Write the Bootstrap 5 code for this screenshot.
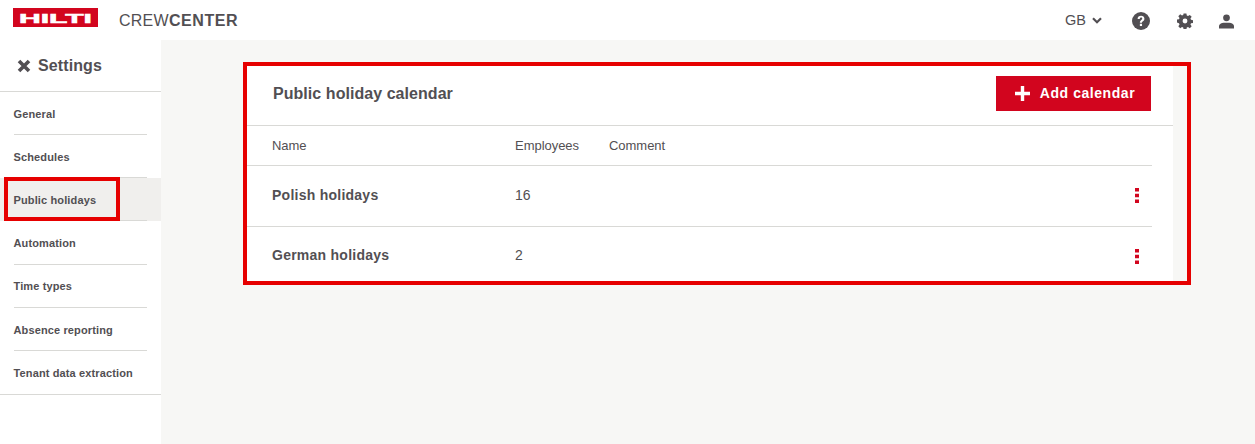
<!DOCTYPE html>
<html lang="en">
<head>
    <meta charset="UTF-8">
    <meta name="viewport" content="width=device-width, initial-scale=1.0">
    <title>Crew Center</title>
    <link href="https://cdn.jsdelivr.net/npm/bootstrap@5.3.0/dist/css/bootstrap.min.css" rel="stylesheet">
    <style>
        html, body { height: 100%; overflow: hidden; }
        body { font-family: "Liberation Sans", Arial, sans-serif; color: #524f53; background: #f7f7f5; }
        .top-bar { height: 40px; background: #fff; padding: 0 21px 0 13px; }
        .brand-logo { display: block; width: 85px; height: 19px; margin-top: -6px; }
        .brand-name { font-size: 16px; margin-left: 21px; margin-top: 1px; letter-spacing: .25px; }
        .brand-name b { letter-spacing: .6px; }
        .top-lang { font-size: 14.5px; margin-right: 30px; margin-top: 1px; }
        .top-lang svg { margin-left: 6px; }
        .top-icons { gap: 26.5px; margin-top: 2px; }
        .page-body { height: 404px; }
        .side-nav { width: 161px; background: #fff; flex: none; }
        .side-title { height: 52px; border-bottom: 1px solid #d9d9d6; padding: 0 0 0 17px; font-size: 16px; font-weight: 700; gap: 7px; letter-spacing: .1px; }
        .side-list { border-bottom: 1px solid #d9d9d6; }
        .side-item { position: relative; height: 43.15px; padding: 0 14px 0 13.5px; font-size: 11px; font-weight: 700; letter-spacing: .13px; }
        .side-item span { display: flex; align-items: center; height: 100%; padding-top: 2px; border-bottom: 1px solid #d9d9d6; }
        .side-item:last-child span { border-bottom: 0; }
        .side-item.is-active { background: #f0efed; }
        .side-mark { position: absolute; left: 4px; top: -1px; width: 116px; height: 44px; border: 4px solid #e60000; }
        .main-area { padding: 22px 64px 0 82px; }
        .mark-frame { border: 4px solid #e60000; height: 223px; padding-right: 14px; }
        .cal-panel { background: #fff; height: 100%; }
        .cal-head { height: 60px; padding: 0 22px 4px 26px; border-bottom: 1px solid #d9d9d6; }
        .cal-title { font-size: 16px; font-weight: 700; margin: 0; letter-spacing: .05px; }
        .btn-add { background: #d2051e; color: #fff; border: 0; border-radius: 0; height: 35px; width: 155px; padding: 0 0 0 3px; font-size: 14px; font-weight: 700; letter-spacing: .55px; gap: 10px; }
        .btn-add:hover { background: #d2051e; color: #fff; }
        .cal-table { table-layout: fixed; color: #524f53; --bs-table-bg: transparent; margin: 0; font-size: 13px; }
        .cal-table th, .cal-table td { padding: 0; vertical-align: middle; border-color: #d9d9d6; }
        .cal-table thead th { height: 39px; font-weight: 400; font-size: 13px; letter-spacing: -.03px; }
        .cal-table tbody td { height: 61px; font-size: 14px; }
        .cal-table tbody tr:last-child td { border-bottom: 0; height: 54px; padding-top: 4px; }
        .cal-table .col-name { width: 268px; padding-left: 25px; font-weight: 700; letter-spacing: .25px; }
        .cal-table thead .col-name { font-weight: 400; letter-spacing: -.03px; }
        .cal-table .col-count { width: 94px; }
        .cal-table .col-act { width: 30px; }
        .cal-table .col-gap { width: 21px; border-bottom: 0; }
        .dots-icon { display: block; margin-left: 13px; }
        .cal-table tbody tr:last-child .dots-icon { margin-top: 2px; }
    </style>
</head>
<body>
    <!-- Top bar -->
    <header class="top-bar d-flex align-items-center justify-content-between">
        <div class="d-flex align-items-center">
            <svg class="brand-logo" viewBox="0 0 85 19" role="img" aria-label="Hilti">
                <rect width="85" height="19" fill="#d2051e"/>
                <text x="6" y="14.500" fill="#fff" stroke="#fff" stroke-width=".5" font-family="Liberation Sans" font-weight="700" font-size="12.5" textLength="73" lengthAdjust="spacingAndGlyphs">HILTI</text>
            </svg>
            <div class="brand-name">CREW<b>CENTER</b></div>
        </div>
        <div class="d-flex align-items-center">
            <div class="top-lang d-flex align-items-center">GB
                <svg width="10" height="7" viewBox="0 0 10 7"><path d="M1 1.200l4 4 4-4" fill="none" stroke="#524f53" stroke-width="2.200"/></svg>
            </div>
            <div class="top-icons d-flex align-items-center">
                <svg width="18" height="18" viewBox="0 0 19 19">
                    <circle cx="9.500" cy="9.500" r="9.500" fill="#524f53"/>
                    <path d="M5.900 7.300c0-2 1.500-3.300 3.700-3.300 2 0 3.500 1.200 3.500 3 0 2.500-2.600 2.500-2.600 4.400H8.300c0-3 2.500-2.900 2.500-4.300 0-.7-.5-1.200-1.200-1.200-.8 0-1.400.6-1.400 1.500z" fill="#fff"/>
                    <rect x="8.300" y="12.400" width="2.300" height="2.400" fill="#fff"/>
                </svg>
                <svg width="16" height="16" viewBox="0 0 17 17">
                    <path d="M7 .5h3l.4 2.200 1.300.6 1.900-1.300 2 2-1.300 1.900.6 1.300 2.100.4v3l-2.100.4-.6 1.300 1.300 1.900-2 2-1.900-1.300-1.300.6-.4 2.100H7l-.4-2.100-1.300-.6-1.900 1.300-2-2 1.300-1.900-.6-1.300L0 10V7l2.100-.4.6-1.300L1.400 3.400l2-2 1.900 1.300 1.300-.6z" fill="#524f53"/>
                    <circle cx="8.500" cy="8.500" r="2.600" fill="#fff"/>
                </svg>
                <svg width="15" height="15" viewBox="0 0 16 16">
                    <circle cx="8" cy="4" r="3.600" fill="#524f53"/>
                    <path d="M0 15.500v-2.600c0-2 2.600-3.400 5-3.600h6c2.400.2 5 1.600 5 3.600v2.600z" fill="#524f53"/>
                </svg>
            </div>
        </div>
    </header>

    <div class="page-body d-flex">
        <!-- Sidebar -->
        <nav class="side-nav">
            <div class="side-title d-flex align-items-center">
                <svg width="14" height="14" viewBox="0 0 14 14"><path d="M2 2l10 10M12 2L2 12" stroke="#524f53" stroke-width="3.600"/></svg>
                Settings
            </div>
            <div class="side-list">
                <div class="side-item"><span>General</span></div>
                <div class="side-item"><span>Schedules</span></div>
                <div class="side-item is-active"><span>Public holidays</span><div class="side-mark"></div></div>
                <div class="side-item"><span>Automation</span></div>
                <div class="side-item"><span>Time types</span></div>
                <div class="side-item"><span>Absence reporting</span></div>
                <div class="side-item"><span>Tenant data extraction</span></div>
            </div>
        </nav>

        <!-- Calendar list -->
        <main class="main-area flex-grow-1">
            <div class="mark-frame">
                <section class="cal-panel">
                    <div class="cal-head d-flex align-items-center justify-content-between">
                        <h1 class="cal-title">Public holiday calendar</h1>
                        <button type="button" class="btn btn-add d-flex align-items-center justify-content-center">
                            <svg width="15" height="15" viewBox="0 0 15 15"><path d="M7.500 0v15M0 7.500h15" stroke="#fff" stroke-width="3.400"/></svg>
                            Add calendar
                        </button>
                    </div>
                    <table class="table cal-table">
                        <thead>
                            <tr><th class="col-name">Name</th><th class="col-count">Employees</th><th>Comment</th><th class="col-act"></th><th class="col-gap"></th></tr>
                        </thead>
                        <tbody>
                            <tr>
                                <td class="col-name">Polish holidays</td><td>16</td><td></td>
                                <td><svg class="dots-icon" width="4" height="15" viewBox="0 0 4 15"><path d="M0 0h4v3.600H0zM0 5.700h4v3.600H0zM0 11.400h4V15H0z" fill="#d2051e"/></svg></td>
                                <td class="col-gap"></td>
                            </tr>
                            <tr>
                                <td class="col-name">German holidays</td><td>2</td><td></td>
                                <td><svg class="dots-icon" width="4" height="15" viewBox="0 0 4 15"><path d="M0 0h4v3.600H0zM0 5.700h4v3.600H0zM0 11.400h4V15H0z" fill="#d2051e"/></svg></td>
                                <td class="col-gap"></td>
                            </tr>
                        </tbody>
                    </table>
                </section>
            </div>
        </main>
    </div>

    <script src="https://cdn.jsdelivr.net/npm/bootstrap@5.3.0/dist/js/bootstrap.bundle.min.js"></script>
</body>
</html>
